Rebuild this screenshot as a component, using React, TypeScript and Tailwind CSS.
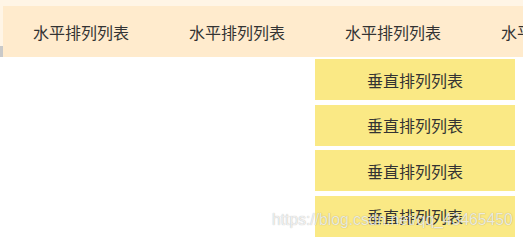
import React from "react";

const navItems = ["水平排列列表", "水平排列列表", "水平排列列表", "水平排列列表"];
const dropItems = ["垂直排列列表", "垂直排列列表", "垂直排列列表", "垂直排列列表"];

export default function App() {
  return (
    <div
      className="relative w-[523px] h-[240px] overflow-hidden bg-white text-[#333333]"
      style={{ fontFamily: '"Noto Sans CJK SC", "Liberation Sans", sans-serif' }}
    >
      <div className="h-[6px] bg-[#fff5e6]" />
      <div className="flex h-[51px]">
        <div className="flex w-[3px] shrink-0 flex-col">
          <div className="flex-1 bg-[#fff5e6]" />
          <div className="h-[11px] bg-[#c9c9c9]" />
        </div>
        <ul className="flex flex-1 overflow-hidden bg-[#ffebcd]">
          {navItems.map((t, i) => (
            <li
              key={i}
              className="flex w-[156px] shrink-0 items-center justify-center text-[16px] leading-none"
            >
              {t}
            </li>
          ))}
        </ul>
      </div>
      <ul className="ml-[315px] mt-[2px] flex w-[200px] flex-col gap-[4.6px]">
        {dropItems.map((t, i) => (
          <li
            key={i}
            className="flex h-[41px] items-center justify-center bg-[#fae985] text-[16px] leading-none"
          >
            {t}
          </li>
        ))}
      </ul>
      <div
        className="absolute left-[272px] top-[210px] whitespace-nowrap text-[15.7px] leading-[20px] text-[rgba(255,255,255,0.8)] [text-shadow:0_0_1px_rgba(0,0,0,0.35)]"
        style={{ fontFamily: '"Liberation Sans", Arial, sans-serif' }}
      >
        https://blog.csdn.net/qq_43465450
      </div>
    </div>
  );
}
